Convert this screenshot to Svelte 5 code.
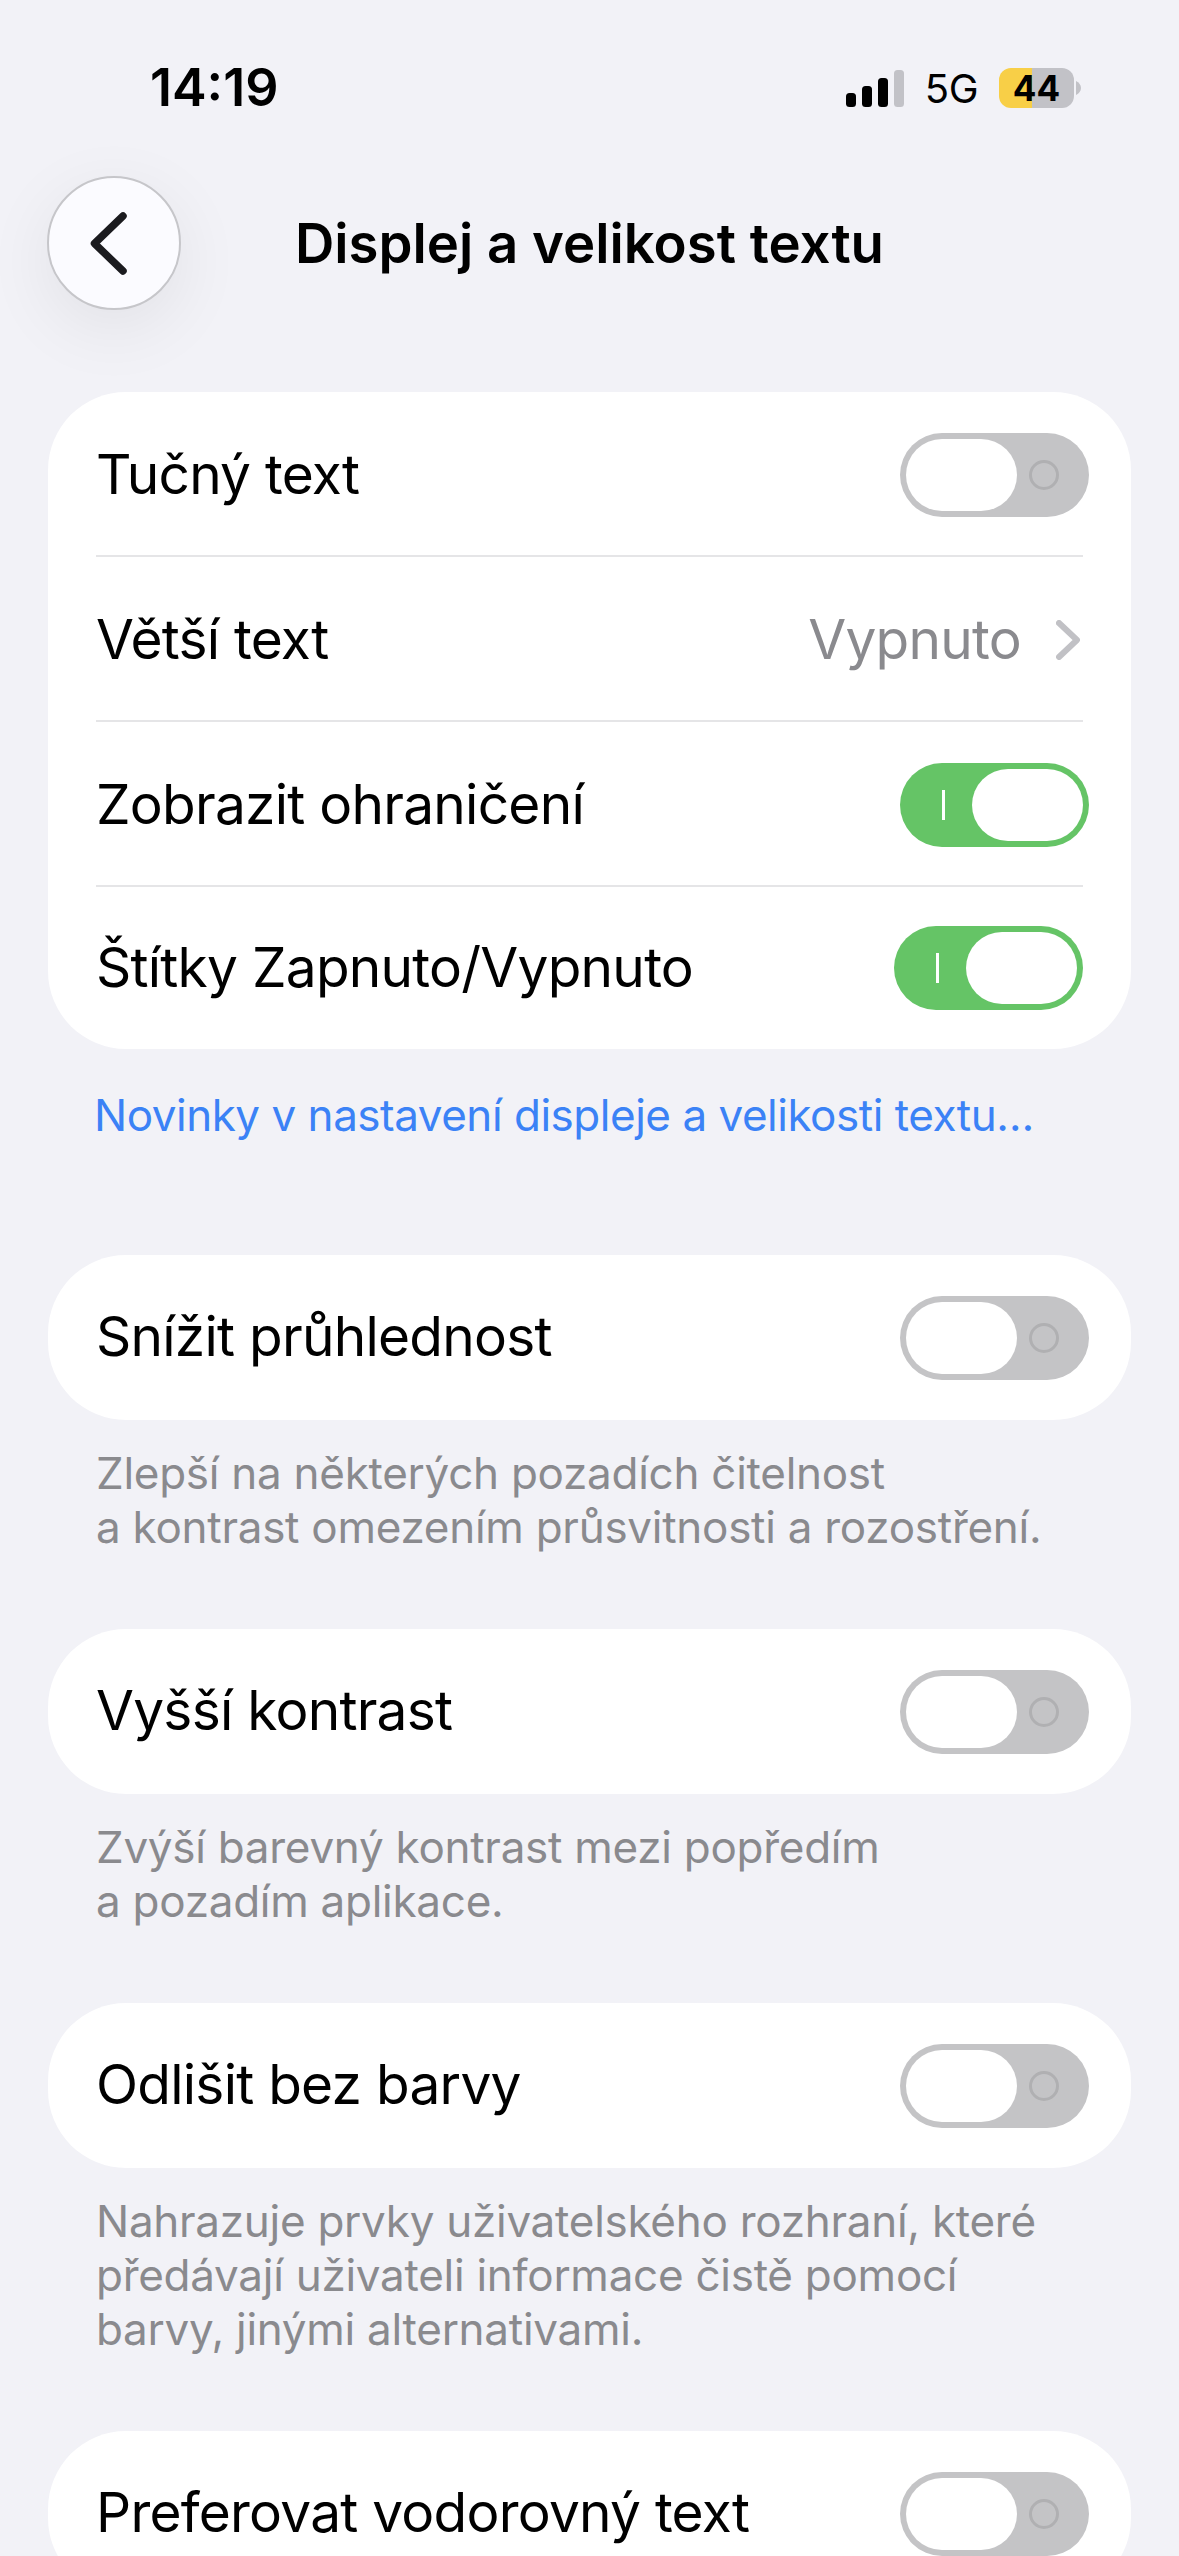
<script>
	const groups = [
		{
			rows: [
				{ label: 'Tučný text', on: false },
				{ label: 'Větší text', value: 'Vypnuto' },
				{ label: 'Zobrazit ohraničení', on: true },
				{ label: 'Štítky Zapnuto/Vypnuto', on: true, nudge: true }
			],
			link: 'Novinky v nastavení displeje a velikosti textu…'
		},
		{
			rows: [{ label: 'Snížit průhlednost', on: false }],
			note: ['Zlepší na některých pozadích čitelnost', 'a kontrast omezením průsvitnosti a rozostření.']
		},
		{
			rows: [{ label: 'Vyšší kontrast', on: false }],
			note: ['Zvýší barevný kontrast mezi popředím', 'a pozadím aplikace.']
		},
		{
			rows: [{ label: 'Odlišit bez barvy', on: false }],
			note: [
				'Nahrazuje prvky uživatelského rozhraní, které',
				'předávají uživateli informace čistě pomocí',
				'barvy, jinými alternativami.'
			]
		},
		{
			rows: [{ label: 'Preferovat vodorovný text', on: false }]
		}
	];
</script>

<div class="screen">
	<div class="status">
		<span class="time">14:19</span>
		<div class="status-right">
			<svg class="signal" width="58" height="37" viewBox="0 0 58 37">
				<rect x="0" y="23" width="10" height="14" rx="3.500" fill="#000" />
				<rect x="16" y="16" width="10" height="21" rx="3.500" fill="#000" />
				<rect x="32" y="8" width="10" height="29" rx="3.500" fill="#000" />
				<rect x="48" y="0" width="10" height="37" rx="3.500" fill="#c2c2c7" />
			</svg>
			<span class="net">5G</span>
			<div class="battery">
				<div class="battery-body"><span>44</span></div>
				<svg class="battery-cap" width="5" height="14" viewBox="0 0 5 14">
					<path d="M0 0c3 1.500 5 4 5 7s-2 5.500-5 7z" fill="#c2c2c7" />
				</svg>
			</div>
		</div>
	</div>

	<div class="nav">
		<button class="back" aria-label="Zpět">
			<svg width="37" height="63" viewBox="0 0 37 63">
				<path d="M33 4 4.500 31.500 33 59" fill="none" stroke="#1b1b1f" stroke-width="7.500" stroke-linecap="round" stroke-linejoin="round" />
			</svg>
		</button>
		<h1>Displej a velikost textu</h1>
	</div>

	{#each groups as group}
		<section class="group">
			<div class="card" class:multi={group.rows.length > 1}>
				{#each group.rows as row}
					<div class="row">
						<span class="label">{row.label}</span>
						{#if row.value}
							<span class="value">{row.value}</span>
							<svg class="chevron" width="24" height="40" viewBox="0 0 24 40">
								<path d="M3 3l18 17L3 37" fill="none" stroke="#c1c1c5" stroke-width="6" stroke-linecap="round" stroke-linejoin="round" />
							</svg>
						{:else}
							<div class="toggle" class:on={row.on} class:nudge={row.nudge}>
								{#if row.on}<i class="bar"></i>{:else}<i class="ring"></i>{/if}
								<i class="knob"></i>
							</div>
						{/if}
					</div>
				{/each}
			</div>
			{#if group.link}
				<p class="link">{group.link}</p>
			{/if}
			{#if group.note}
				<p class="note">
					{#each group.note as line}<span>{line}</span>{/each}
				</p>
			{/if}
		</section>
	{/each}
</div>

<style>
	:global(body) {
		margin: 0;
		background: #f2f2f7;
	}

	.screen {
		width: 1179px;
		height: 2556px;
		overflow: hidden;
		background: #f2f2f7;
		color: #000;
		font-family: Inter, 'Liberation Sans', sans-serif;
	}

	.status {
		height: 176px;
		display: flex;
		justify-content: space-between;
		align-items: flex-start;
		padding: 60px 98px 0 150px;
		box-sizing: border-box;
	}
	.time {
		font-size: 52px;
		line-height: 56px;
		font-weight: 600;
	}
	.status-right {
		display: flex;
		align-items: center;
		gap: 21px;
		height: 56px;
	}
	.net {
		font-size: 40px;
		font-weight: 400;
		letter-spacing: -0.5px;
	}
	.battery {
		display: flex;
		align-items: center;
		gap: 2px;
	}
	.battery-body {
		width: 75px;
		height: 40px;
		border-radius: 12px;
		background: linear-gradient(90deg, #f8cf47 44%, #c2c2c7 44%);
		display: flex;
		align-items: center;
		justify-content: center;
	}
	.battery-body span {
		font-size: 35px;
		font-weight: 700;
	}

	.nav {
		height: 134px;
		margin-bottom: 82px;
		display: flex;
		align-items: center;
		padding-left: 47px;
	}
	.back {
		width: 134px;
		height: 134px;
		border-radius: 50%;
		border: 2px solid #c6c6ca;
		background: #fbfbff;
		box-shadow: 0 18px 70px rgba(0, 0, 0, 0.07);
		padding: 0;
		display: flex;
		align-items: center;
		justify-content: center;
		box-sizing: border-box;
	}
	.back svg {
		margin-right: 11px;
	}
	h1 {
		margin: 0 0 0 114px;
		font-size: 54.500px;
		font-weight: 600;
		white-space: nowrap;
	}

	.group {
		padding: 0 48px;
		margin-bottom: 75px;
	}
	.card {
		background: #fff;
		border-radius: 78px;
		overflow: hidden;
	}
	.row {
		height: 165px;
		box-sizing: border-box;
		padding-top: 3px;
		display: flex;
		align-items: center;
		margin: 0 48px;
		border-bottom: 2px solid #e5e5e7;
	}
	.row:last-child {
		padding-top: 0;
		border-bottom: 0;
	}
	.multi .row:last-child {
		height: 162px;
	}
	.label {
		flex: 1;
		margin-top: -3px;
		font-size: 55px;
		letter-spacing: -0.75px;
		white-space: nowrap;
	}
	.value {
		margin-top: -3px;
		font-size: 55px;
		letter-spacing: -0.75px;
		color: #8a8a8e;
	}
	.chevron {
		margin: 0 3px 0 35px;
	}

	.toggle {
		position: relative;
		width: 189px;
		height: 84px;
		margin-right: -6px;
		border-radius: 42px;
		background: #c4c4c6;
	}
	.toggle.on {
		background: #65c466;
	}
	.toggle.nudge {
		margin-right: 0;
	}
	.knob {
		position: absolute;
		top: 6px;
		left: 6px;
		width: 111px;
		height: 72px;
		border-radius: 36px;
		background: #fff;
	}
	.on .knob {
		left: 72px;
	}
	.ring {
		position: absolute;
		top: 27px;
		right: 30px;
		width: 30px;
		height: 30px;
		border-radius: 50%;
		border: 3px solid #b0b0b2;
		box-sizing: border-box;
	}
	.bar {
		position: absolute;
		top: 27px;
		left: 42px;
		width: 3px;
		height: 30px;
		background: #fff;
	}

	.link {
		margin: 39px 46px 113px;
		font-size: 44px;
		line-height: 54px;
		letter-spacing: -0.48px;
		white-space: nowrap;
		color: #3b82f6;
	}
	.note {
		margin: 26px 48px 0;
		font-size: 44px;
		line-height: 54px;
		letter-spacing: -0.27px;
		white-space: nowrap;
		color: #8a8a8e;
	}
	.note span {
		display: block;
	}
</style>
